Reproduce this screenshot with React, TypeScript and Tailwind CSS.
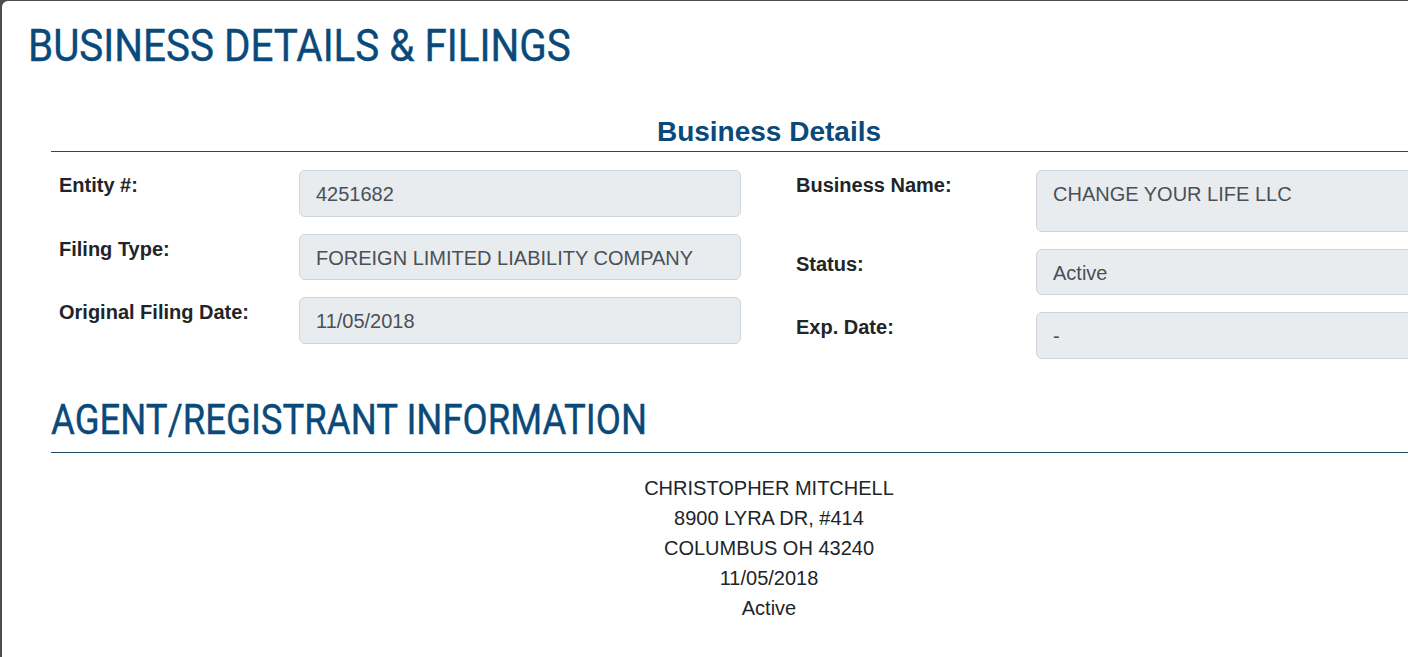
import React from "react";

const inputCls =
  "w-[442px] shrink-0 rounded-[6px] border border-[#ced4da] bg-[#e9ecef] pl-[16px] pt-[8px] text-[20px] leading-[30px] text-[#495057]";

function Row({ label, value, h, lw }: { label: string; value: string; h: string; lw: string }) {
  return (
    <div className="flex items-start">
      <div className={`${lw} shrink-0 text-[20px] font-bold leading-[30px] text-[#212529]`}>{label}</div>
      <div className={`${inputCls} ${h}`}>{value}</div>
    </div>
  );
}

export default function App() {
  return (
    <div
      className="h-[657px] w-[1408px] overflow-hidden bg-[#4d4d4d]"
      style={{ fontFamily: '"Liberation Sans", Arial, sans-serif' }}
    >
      <div className="ml-[2px] mt-[1px] h-[700px] w-[1600px] rounded-tl-[6px] bg-white">
        <div className="pl-[26px] pt-[18px]">
          <h1
            className="inline-block origin-left scale-x-[0.897] text-[45px] leading-[54px] text-[#0a4a7a] [-webkit-text-stroke:0.4px_#0a4a7a]"
            style={{ fontFamily: "Roboto, sans-serif" }}
          >
            BUSINESS DETAILS &amp; FILINGS
          </h1>
        </div>
        <div className="ml-[49px] w-[1436px] pt-[43px]">
          <h2 className="border-b border-[#1d4c63] pb-[3px] text-center text-[28px] font-bold leading-[32px] text-[#0a4a7a]">
            Business Details
          </h2>
          <div className="flex pt-[18px]">
            <div className="flex w-[718px] flex-col gap-[17px] pl-[8px]">
              <Row label="Entity #:" value="4251682" h="h-[47px]" lw="w-[240px]" />
              <Row label="Filing Type:" value="FOREIGN LIMITED LIABILITY COMPANY" h="h-[46px]" lw="w-[240px]" />
              <Row label="Original Filing Date:" value="11/05/2018" h="h-[47px]" lw="w-[240px]" />
            </div>
            <div className="flex w-[718px] flex-col gap-[17px] pl-[27px]">
              <Row label="Business Name:" value="CHANGE YOUR LIFE LLC" h="h-[62px]" lw="w-[240px]" />
              <Row label="Status:" value="Active" h="h-[46px]" lw="w-[240px]" />
              <Row label="Exp. Date:" value="-" h="h-[47px]" lw="w-[240px]" />
            </div>
          </div>
          <div className="mt-[36px] border-b border-[#1d4c63] pb-[7px]">
            <h2
              className="inline-block origin-left scale-x-[0.87] text-[42px] leading-[50px] text-[#0a4a7a] [-webkit-text-stroke:0.4px_#0a4a7a]"
              style={{ fontFamily: "Roboto, sans-serif" }}
            >
              AGENT/REGISTRANT INFORMATION
            </h2>
          </div>
          <div className="pt-[20px] text-center text-[20px] leading-[30px] text-[#212529]">
            <div>CHRISTOPHER MITCHELL</div>
            <div>8900 LYRA DR, #414</div>
            <div>COLUMBUS OH 43240</div>
            <div>11/05/2018</div>
            <div>Active</div>
          </div>
        </div>
      </div>
    </div>
  );
}
